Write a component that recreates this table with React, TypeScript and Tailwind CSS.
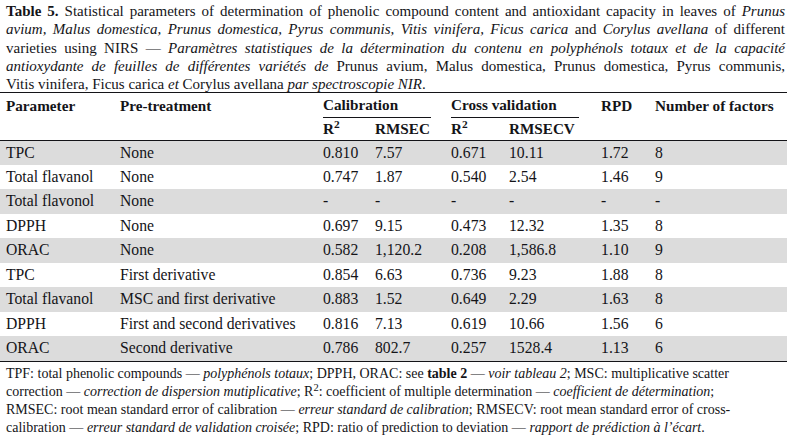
const rows: string[][] = [
  ["TPC", "None", "0.810", "7.57", "0.671", "10.11", "1.72", "8"],
  ["Total flavanol", "None", "0.747", "1.87", "0.540", "2.54", "1.46", "9"],
  ["Total flavonol", "None", "-", "-", "-", "-", "-", "-"],
  ["DPPH", "None", "0.697", "9.15", "0.473", "12.32", "1.35", "8"],
  ["ORAC", "None", "0.582", "1,120.2", "0.208", "1,586.8", "1.10", "9"],
  ["TPC", "First derivative", "0.854", "6.63", "0.736", "9.23", "1.88", "8"],
  ["Total flavanol", "MSC and first derivative", "0.883", "1.52", "0.649", "2.29", "1.63", "8"],
  ["DPPH", "First and second derivatives", "0.816", "7.13", "0.619", "10.66", "1.56", "6"],
  ["ORAC", "Second derivative", "0.786", "802.7", "0.257", "1528.4", "1.13", "6"],
];

const widths = ["w-[114px]", "w-[203px]", "w-[52px]", "w-[76px]", "w-[58px]", "w-[92px]", "w-[54px]", "w-[138px]"];

function Line({ children, last }: { children: React.ReactNode; last?: boolean }) {
  return (
    <div className={last ? "whitespace-nowrap" : "whitespace-nowrap text-justify [text-align-last:justify]"}>
      {children}
    </div>
  );
}

export default function App() {
  return (
    <div className="w-[787px] h-[440px] bg-white text-[#141418] font-[family-name:Liberation_Serif,serif] overflow-hidden">
      <div className="h-[92px] pt-[2px] pl-[6px] pr-[2px] text-[15px] leading-[18.3px]">
        <Line>
          <b>Table 5.</b> Statistical parameters of determination of phenolic compound content and antioxidant capacity in leaves of <i>Prunus</i>
        </Line>
        <Line>
          <i>avium, Malus domestica, Prunus domestica, Pyrus communis, Vitis vinifera, Ficus carica</i> and <i>Corylus avellana</i> of different
        </Line>
        <Line>
          varieties using NIRS — <i>Paramètres statistiques de la détermination du contenu en polyphénols totaux et de la capacité</i>
        </Line>
        <Line>
          <i>antioxydante de feuilles de différentes variétés de</i> Prunus avium, Malus domestica, Prunus domestica, Pyrus communis,
        </Line>
        <Line last>
          Vitis vinifera, Ficus carica <i>et</i> Corylus avellana <i>par spectroscopie NIR</i>.
        </Line>
      </div>

      <table className="table-fixed w-[787px] border-collapse text-[15.7px] leading-none">
        <colgroup>
          {widths.map((w, i) => (
            <col key={i} className={w} />
          ))}
        </colgroup>
        <thead className="font-bold text-[15.2px]">
          <tr className="h-[25px] border-t border-[#141418]">
            <th className="pl-[6px] text-left font-bold">Parameter</th>
            <th className="pl-[6px] text-left font-bold">Pre-treatment</th>
            <th colSpan={2} className="text-left font-bold pl-[6px] pr-[14px]">
              <div className="h-[25px] flex items-center border-b border-[#141418]">Calibration</div>
            </th>
            <th colSpan={2} className="text-left font-bold pl-[6px] pr-[16px]">
              <div className="h-[25px] flex items-center border-b border-[#141418]">Cross validation</div>
            </th>
            <th className="pl-[6px] text-left font-bold">RPD</th>
            <th className="pl-[6px] text-left font-bold">Number of factors</th>
          </tr>
          <tr className="h-[22px] border-b border-[#141418]">
            <th></th>
            <th></th>
            <th className="pl-[6px] text-left font-bold">
              R<sup>2</sup>
            </th>
            <th className="pl-[6px] text-left font-bold">RMSEC</th>
            <th className="pl-[6px] text-left font-bold">
              R<sup>2</sup>
            </th>
            <th className="pl-[6px] text-left font-bold">RMSECV</th>
            <th></th>
            <th></th>
          </tr>
        </thead>
        <tbody>
          {rows.map((row, index) => (
            <tr key={index} className={index % 2 === 0 ? "h-[24.5px] bg-[#dcdcdc]" : "h-[24.5px] bg-white"}>
              {row.map((cell, j) => (
                <td key={j} className="pl-[6px] whitespace-nowrap">
                  {cell}
                </td>
              ))}
            </tr>
          ))}
        </tbody>
      </table>

      <div className="border-t border-[#141418] pt-[3px] pl-[6px] text-[14px] leading-[18.3px]">
        <div className="whitespace-nowrap">
          TPF: total phenolic compounds — <i>polyphénols totaux</i>; DPPH, ORAC: see <b>table 2</b> — <i>voir tableau 2</i>; MSC: multiplicative scatter
        </div>
        <div className="whitespace-nowrap">
          correction — <i>correction de dispersion mutiplicative</i>; R<sup>2</sup>: coefficient of multiple determination — <i>coefficient de détermination</i>;
        </div>
        <div className="whitespace-nowrap">
          RMSEC: root mean standard error of calibration — <i>erreur standard de calibration</i>; RMSECV: root mean standard error of cross-
        </div>
        <div className="whitespace-nowrap">
          calibration — <i>erreur standard de validation croisée</i>; RPD: ratio of prediction to deviation — <i>rapport de prédiction à l’écart</i>.
        </div>
      </div>
    </div>
  );
}
